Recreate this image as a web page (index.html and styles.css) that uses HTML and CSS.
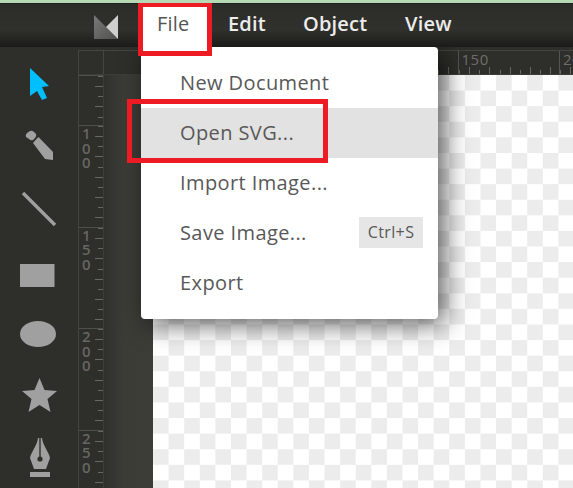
FILE: index.html
```html
<!DOCTYPE html>
<html lang="en">
<head>
<meta charset="utf-8">
<title>Method Draw</title>
<link rel="stylesheet" href="styles.css">
</head>
<body>
<div class="app">
  <header class="topbar">
    <svg class="logo" width="26" height="26" viewBox="0 0 26 26"><defs><linearGradient id="lg" x1="0" y1="0" x2="1" y2="1"><stop offset="0" stop-color="#7a7a78"/><stop offset="1" stop-color="#4f4f4d"/></linearGradient></defs><path d="M1 1 L25 25 L1 25 Z" fill="url(#lg)"/><path d="M25 1 L25 25 L13 13 Z" fill="#cfcfcd"/></svg>
    <nav class="menubar">
      <div class="menu-title active">File</div>
      <div class="menu-title edit">Edit</div>
      <div class="menu-title object">Object</div>
      <div class="menu-title view">View</div>
    </nav>
  </header>
  <div class="main">
    <aside class="tools">
      <svg class="tool" viewBox="0 0 78 62"><path d="M30 15 L49 33 L42 34 L47 45 L42 47 L37 38 L30 43 Z" fill="#00bfff"/></svg>
      <svg class="tool" viewBox="0 0 78 62"><path d="M27 18 L30 16 Q32 15 34 17 L36 19 Q37 21 35 23 L33 25 Q31 26 29 24 L26 22 Q25 20 27 18 Z M36 24.500 L38.500 22 L53 37 L53 45 L45 44 L33 28 Z" fill="#a0a0a0" fill-rule="evenodd"/></svg>
      <svg class="tool" viewBox="0 0 78 62"><path d="M23 16 L55 48" stroke="#a0a0a0" stroke-width="3.400" fill="none"/></svg>
      <svg class="tool" viewBox="0 0 78 62"><rect x="20" y="25" width="34.500" height="23" fill="#a0a0a0"/></svg>
      <svg class="tool" viewBox="0 0 78 62"><ellipse cx="38" cy="33" rx="18" ry="13" fill="#a0a0a0"/></svg>
      <svg class="tool" viewBox="0 0 78 62"><path d="M39.500 15 L44.500 27 L57 28 L47.500 36 L50.500 49 L39.500 42 L28.500 49 L31.500 36 L22 28 L34.500 27 Z" fill="#a0a0a0"/></svg>
      <svg class="tool" viewBox="0 0 78 62"><path d="M38 13 L42 13 C43 21 49 27 50 33 L46 44 L34 44 L30 33 C31 27 37 21 38 13 Z" fill="#a0a0a0"/><path d="M40 13 L40 33" stroke="#2e2e2a" stroke-width="1.400"/><circle cx="40" cy="34" r="2.600" fill="#2e2e2a"/><rect x="30" y="47" width="20" height="5" fill="#a0a0a0"/></svg>
    </aside>
    <div class="stage">
      <div class="ruler-top">
        <div class="corner"></div>
        <div class="hr-gutter"></div>
        <div class="hr-seg"><span>0</span></div>
        <div class="hr-seg"><span>50</span></div>
        <div class="hr-seg"><span>100</span></div>
        <div class="hr-seg"><span>150</span></div>
        <div class="hr-seg"><span>200</span></div>
      </div>
      <div class="work">
        <div class="ruler-left">
          <div class="vr-seg first"></div>
          <div class="vr-seg"><span>100</span></div>
          <div class="vr-seg"><span>150</span></div>
          <div class="vr-seg"><span>200</span></div>
          <div class="vr-seg"><span>250</span></div>
        </div>
        <div class="gutter"></div>
        <div class="canvas"></div>
      </div>
    </div>
  </div>

  <div class="dropdown">
    <div class="item">New Document</div>
    <div class="item hover">Open SVG...</div>
    <div class="item">Import Image...</div>
    <div class="item">Save Image...<span class="shortcut">Ctrl+S</span></div>
    <div class="item">Export</div>
  </div>
  <div class="mark mark-file"></div>
  <div class="mark mark-open"></div>
</div>
</body>
</html>
```
FILE: styles.css
```css
* { box-sizing: border-box; }
html, body { margin: 0; height: 100%; overflow: hidden; }
body { font-family: "Open Sans", "Liberation Sans", sans-serif; background: #2e2e2a; }

.app { position: relative; width: 573px; height: 488px; overflow: hidden; display: flex; flex-direction: column; border-top: 3px solid #b4d9b4; }

.topbar { position: relative; z-index: 2; flex: 0 0 44px; display: flex; align-items: flex-start; background: linear-gradient(#2c2c29 0, #30302c 60%, #1b1b19 100%); border-top: 1px solid #1f1f1d; }
.logo { flex: none; margin: 10px 0 0 93px; }
.menubar { display: flex; margin-left: 22px; height: 43px; }
.menu-title { height: 43px; line-height: 40px; font-size: 20px; font-weight: 600; letter-spacing: .2px; color: #ececec; }
.menu-title.active { width: 66px; padding-left: 16px; background: #fff; color: #555; font-weight: 400; }
.menu-title.edit { margin-left: 21px; width: 75px; }
.menu-title.object { width: 102px; }

.main { flex: 1; display: flex; min-height: 0; padding-top: 3px; background: #2e2e2a; }
.tools { flex: 0 0 78px; padding-top: 3px; display: flex; flex-direction: column; }
.tool { display: block; flex: none; width: 78px; height: 62px; }
.stage { flex: 1; display: flex; flex-direction: column; min-width: 0; }

.ruler-top { flex: 0 0 25px; display: flex; background: #2e2e2a; border-top: 1px solid #444440; border-bottom: 1px solid #3c3c38; }
.corner { flex: 0 0 26px; border-left: 1px solid #444440; border-right: 1px solid #444440; }
.hr-gutter { flex: 0 0 49px; }
.hr-seg { flex: 0 0 101.500px; font-size: 15px; line-height: 16px; color: #6e6e6a; border-left: 1px solid #555551; padding-left: 3px;
  background:
    repeating-linear-gradient(90deg, #666662 0 1px, transparent 1px 20.300px) 10px 100% / 100% 7px no-repeat,
    repeating-linear-gradient(90deg, #666662 0 1px, transparent 1px 10.150px) 0 100% / 100% 4px no-repeat; }
.hr-seg span { display: block; letter-spacing: .5px; }

.work { flex: 1; display: flex; min-height: 0; }
.ruler-left { flex: 0 0 26px; display: flex; flex-direction: column; border-left: 1px solid #444440; border-right: 1px solid #3c3c38; background: #2e2e2a; }
.vr-seg { flex: 0 0 101.500px; border-top: 1px solid #4e4e4a; padding: 0 0 0 3px; font-size: 15px; line-height: 14.500px; font-weight: 600; color: #666662;
  background:
    repeating-linear-gradient(180deg, #666662 0 1px, transparent 1px 20.300px) 100% 10px / 8px 100% no-repeat,
    repeating-linear-gradient(180deg, #666662 0 1px, transparent 1px 10.150px) 100% 0 / 5px 100% no-repeat; }
.vr-seg.first { flex-basis: 50px; }
.vr-seg span { display: block; width: 11px; word-break: break-all; }

.gutter { flex: 0 0 49px; background: linear-gradient(90deg, #30302c, #3c3c37 40%, #3d3d38); }
.canvas { flex: 1; min-width: 0; background-color: #fff;
  background-image: conic-gradient(#fff 25%, #ececec 0 50%, #fff 0 75%, #ececec 0);
  background-size: 31.200px 31.200px; background-position: 0 0; }

.dropdown { position: absolute; z-index: 1; left: 141px; top: 44px; width: 297px; height: 272px; padding: 11px 0; background: #fff; border-radius: 0 4px 4px 4px; box-shadow: 6px 5px 26px rgba(0,0,0,.65); color: #585858; }
.item { position: relative; height: 50px; line-height: 50px; padding-left: 39px; font-size: 20px; letter-spacing: .4px; }
.item.hover { background: #e2e2e2; }
.shortcut { position: absolute; right: 15px; top: 9px; width: 64px; height: 31px; line-height: 31px; text-align: center; background: #e6e6e6; font-size: 16px; letter-spacing: .4px; }

.mark { position: absolute; z-index: 3; border: 5px solid #ed1c24; }
.mark-file { left: 138px; top: -1px; width: 74px; height: 54px; }
.mark-open { left: 127px; top: 96px; width: 201px; height: 64px; }
```
